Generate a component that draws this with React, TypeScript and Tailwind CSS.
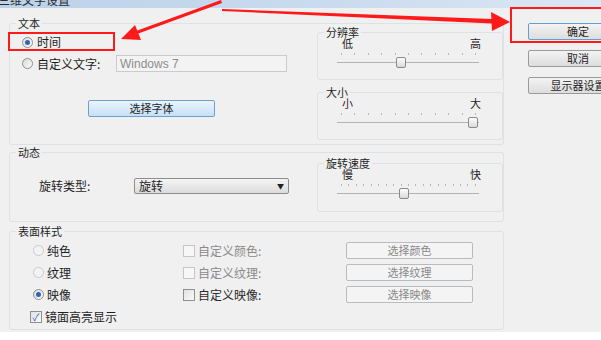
import React from 'react';

const Radio = ({ checked = false, disabled = false }: { checked?: boolean; disabled?: boolean }) => (
  <span
    className={`flex h-[11px] w-[11px] shrink-0 items-center justify-center rounded-full border ${
      disabled ? 'border-[#c9c9c9] bg-[#f3f3f3]' : 'border-[#8f8f8f] bg-gradient-to-br from-[#dcdcdc] to-[#fbfbfb]'
    }`}
  >
    {checked && <span className="h-[5px] w-[5px] rounded-full bg-[#2a67b8]" />}
  </span>
);

const Check = ({ checked = false, disabled = false }: { checked?: boolean; disabled?: boolean }) => (
  <span
    className={`flex h-[12px] w-[12px] shrink-0 items-center justify-center border ${
      disabled ? 'border-[#c6c6c6] bg-[#f7f7f7]' : 'border-[#8f8f8f] bg-gradient-to-br from-[#e2e2e2] to-[#fafafa]'
    }`}
  >
    {checked && <span className="text-[10px] leading-[10px] text-[#2a5fb0]">✓</span>}
  </span>
);

const GroupLabel = ({ children }: { children: React.ReactNode }) => (
  <div className="-mt-[7px] ml-[6px] w-fit bg-[#f0f0f0] px-[2px] text-[11px] leading-[12px]">{children}</div>
);

const Slider = ({ label, low, high, ticks, pos, h }: { label: string; low: string; high: string; ticks: number; pos: number; h: string }) => (
  <div className={`flex w-[186px] flex-col rounded-[3px] border border-[#dde2e6] ${h}`}>
    <GroupLabel>{label}</GroupLabel>
    <div className="flex justify-between pl-[24px] pr-[21px] text-[11px] leading-[11px]">
      <span>{low}</span>
      <span>{high}</span>
    </div>
    <div className="mt-[4px] flex h-[2px] justify-between pl-[23px] pr-[26px]">
      {Array.from({ length: ticks }).map((_, i) => (
        <span key={i} className="h-[2px] w-px bg-[#b8b8b8]" />
      ))}
    </div>
    <div className="relative ml-[19px] mr-[23px] mt-[2px] h-[11px]">
      <div className="absolute left-0 right-0 top-[5px] h-px bg-[#b4b4b4]" />
      <div
        className="absolute top-0 h-[11px] w-[10px] rounded-[2px] border border-[#8a8a8a] bg-gradient-to-b from-[#fdfdfd] to-[#dadada]"
        style={{ left: Math.round(pos * 131) }}
      />
    </div>
  </div>
);

const WinButton = ({ children, className = '' }: { children: React.ReactNode; className?: string }) => (
  <div className={`flex h-[17px] items-center justify-center rounded-[2px] border text-[11px] leading-none ${className}`}>
    {children}
  </div>
);

export default function App() {
  return (
    <div className="relative h-[340px] w-[601px] overflow-hidden bg-white font-['Microsoft_YaHei','Noto_Sans_CJK_SC',sans-serif] text-[#1f1f1f]">
      <div className="h-[8px] overflow-hidden bg-gradient-to-r from-[#bcd2ea] via-[#c8daee] to-[#dbe7f4]">
        <div className="-ml-[2px] -mt-[7px] text-[12px] leading-[14px] text-[#2b2b2b]">三维文字设置</div>
      </div>

      <div className="flex h-[324px] bg-[#f0f0f0]">
        <div className="ml-[9px] flex w-[504px] flex-col">
          {/* 文本 */}
          <div className="mt-[15px] flex h-[122px] flex-col rounded-[3px] border border-[#dde2e6]">
            <GroupLabel>文本</GroupLabel>
            <div className="flex">
              <div className="flex w-[307px] flex-col">
                <div className="ml-[12px] mt-[6px] flex h-[14px] items-center gap-[4px] text-[12px]">
                  <Radio checked />
                  <span>时间</span>
                </div>
                <div className="ml-[12px] mt-[6px] flex h-[17px] items-center text-[12px]">
                  <Radio />
                  <span className="ml-[4px] w-[79px]">自定义文字:</span>
                  <div className="flex h-[17px] w-[171px] items-center border border-[#c9cbcf] bg-[#f3f3f3] pl-[3px] font-['Liberation_Sans',sans-serif] text-[12px] text-[#8c8c8c]">
                    Windows 7
                  </div>
                </div>
                <WinButton className="ml-[78px] mt-[28px] w-[127px] border-[#6f9fcc] bg-gradient-to-b from-[#eaf4fc] to-[#c6e0f6]">
                  选择字体
                </WinButton>
              </div>
              <div className="flex flex-col">
                <div className="mt-[3px]">
                  <Slider label="分辨率" low="低" high="高" ticks={11} pos={0.45} h="h-[48px]" />
                </div>
                <div className="mt-[12px]">
                  <Slider label="大小" low="小" high="大" ticks={11} pos={1} h="h-[48px]" />
                </div>
              </div>
            </div>
          </div>

          {/* 动态 */}
          <div className="mt-[7px] flex h-[70px] flex-col rounded-[3px] border border-[#dde2e6]">
            <GroupLabel>动态</GroupLabel>
            <div className="flex">
              <div className="flex w-[307px]">
                <div className="ml-[29px] mt-[20px] flex h-[16px] items-center text-[12px]">
                  <span className="w-[95px]">旋转类型:</span>
                  <div className="flex h-[16px] w-[155px] items-center justify-between rounded-[2px] border border-[#8d8d8d] bg-gradient-to-b from-[#f4f4f4] to-[#dcdcdc] pl-[4px] pr-[4px]">
                    <span className="leading-none">旋转</span>
                    <span className="text-[7px] leading-none">▼</span>
                  </div>
                </div>
              </div>
              <div className="mt-[5px]">
                <Slider label="旋转速度" low="慢" high="快" ticks={19} pos={0.47} h="h-[49px]" />
              </div>
            </div>
          </div>

          {/* 表面样式 */}
          <div className="mt-[9px] flex h-[99px] flex-col rounded-[3px] border border-[#dde2e6]">
            <GroupLabel>表面样式</GroupLabel>
            <div className="ml-[23px] mt-[5px] grid grid-cols-[150px_163px_127px] gap-y-[5px] text-[12px]">
              {[
                { r: '纯色', c: '自定义颜色:', b: '选择颜色', on: false },
                { r: '纹理', c: '自定义纹理:', b: '选择纹理', on: false },
                { r: '映像', c: '自定义映像:', b: '选择映像', on: true },
              ].map((row) => (
                <React.Fragment key={row.r}>
                  <div className="flex h-[17px] items-center gap-[3px]">
                    <Radio checked={row.on} disabled={!row.on} />
                    <span>{row.r}</span>
                  </div>
                  <div className={`flex h-[17px] items-center gap-[3px] ${row.on ? 'text-[#2a2a2a]' : 'text-[#8a8a8a]'}`}>
                    <Check disabled={!row.on} />
                    <span>{row.c}</span>
                  </div>
                  <WinButton className="border-[#b7bcc0] bg-[#f4f4f4] text-[#8a8a8a]">{row.b}</WinButton>
                </React.Fragment>
              ))}
            </div>
            <div className="ml-[20px] mt-[7px] flex h-[14px] items-center gap-[3px] text-[12px]">
              <Check checked />
              <span>镜面高亮显示</span>
            </div>
          </div>
        </div>

        {/* right buttons */}
        <div className="ml-[24px] mt-[15px] flex flex-col gap-[10px]">
          <WinButton className="w-[100px] border-[#5f9fd6] bg-gradient-to-b from-[#f3f3f3] to-[#dddddd]">确定</WinButton>
          <WinButton className="w-[100px] border-[#9a9a9a] bg-gradient-to-b from-[#f3f3f3] to-[#dddddd]">取消</WinButton>
          <WinButton className="w-[100px] border-[#9a9a9a] bg-gradient-to-b from-[#f3f3f3] to-[#dddddd]">显示器设置</WinButton>
        </div>
      </div>

      {/* annotations */}
      <div className="absolute left-[8px] top-[32px] h-[19px] w-[107px] border-2 border-[#ff1a1a]" />
      <div className="absolute left-[510px] top-[7px] h-[36px] w-[100px] border-2 border-[#ff1a1a]" />
      <svg className="pointer-events-none absolute left-0 top-0" width="601" height="340" viewBox="0 0 601 340">
        <polygon points="221,0 222,3 137,34 136,31" fill="#ff1a1a" />
        <polygon points="121,39 135,25 141,40" fill="#ff1a1a" />
        <polygon points="222,9 222,11 492,23.5 492,19" fill="#ff1a1a" />
        <polygon points="510,22 491,12 492,31" fill="#ff1a1a" />
      </svg>
    </div>
  );
}
